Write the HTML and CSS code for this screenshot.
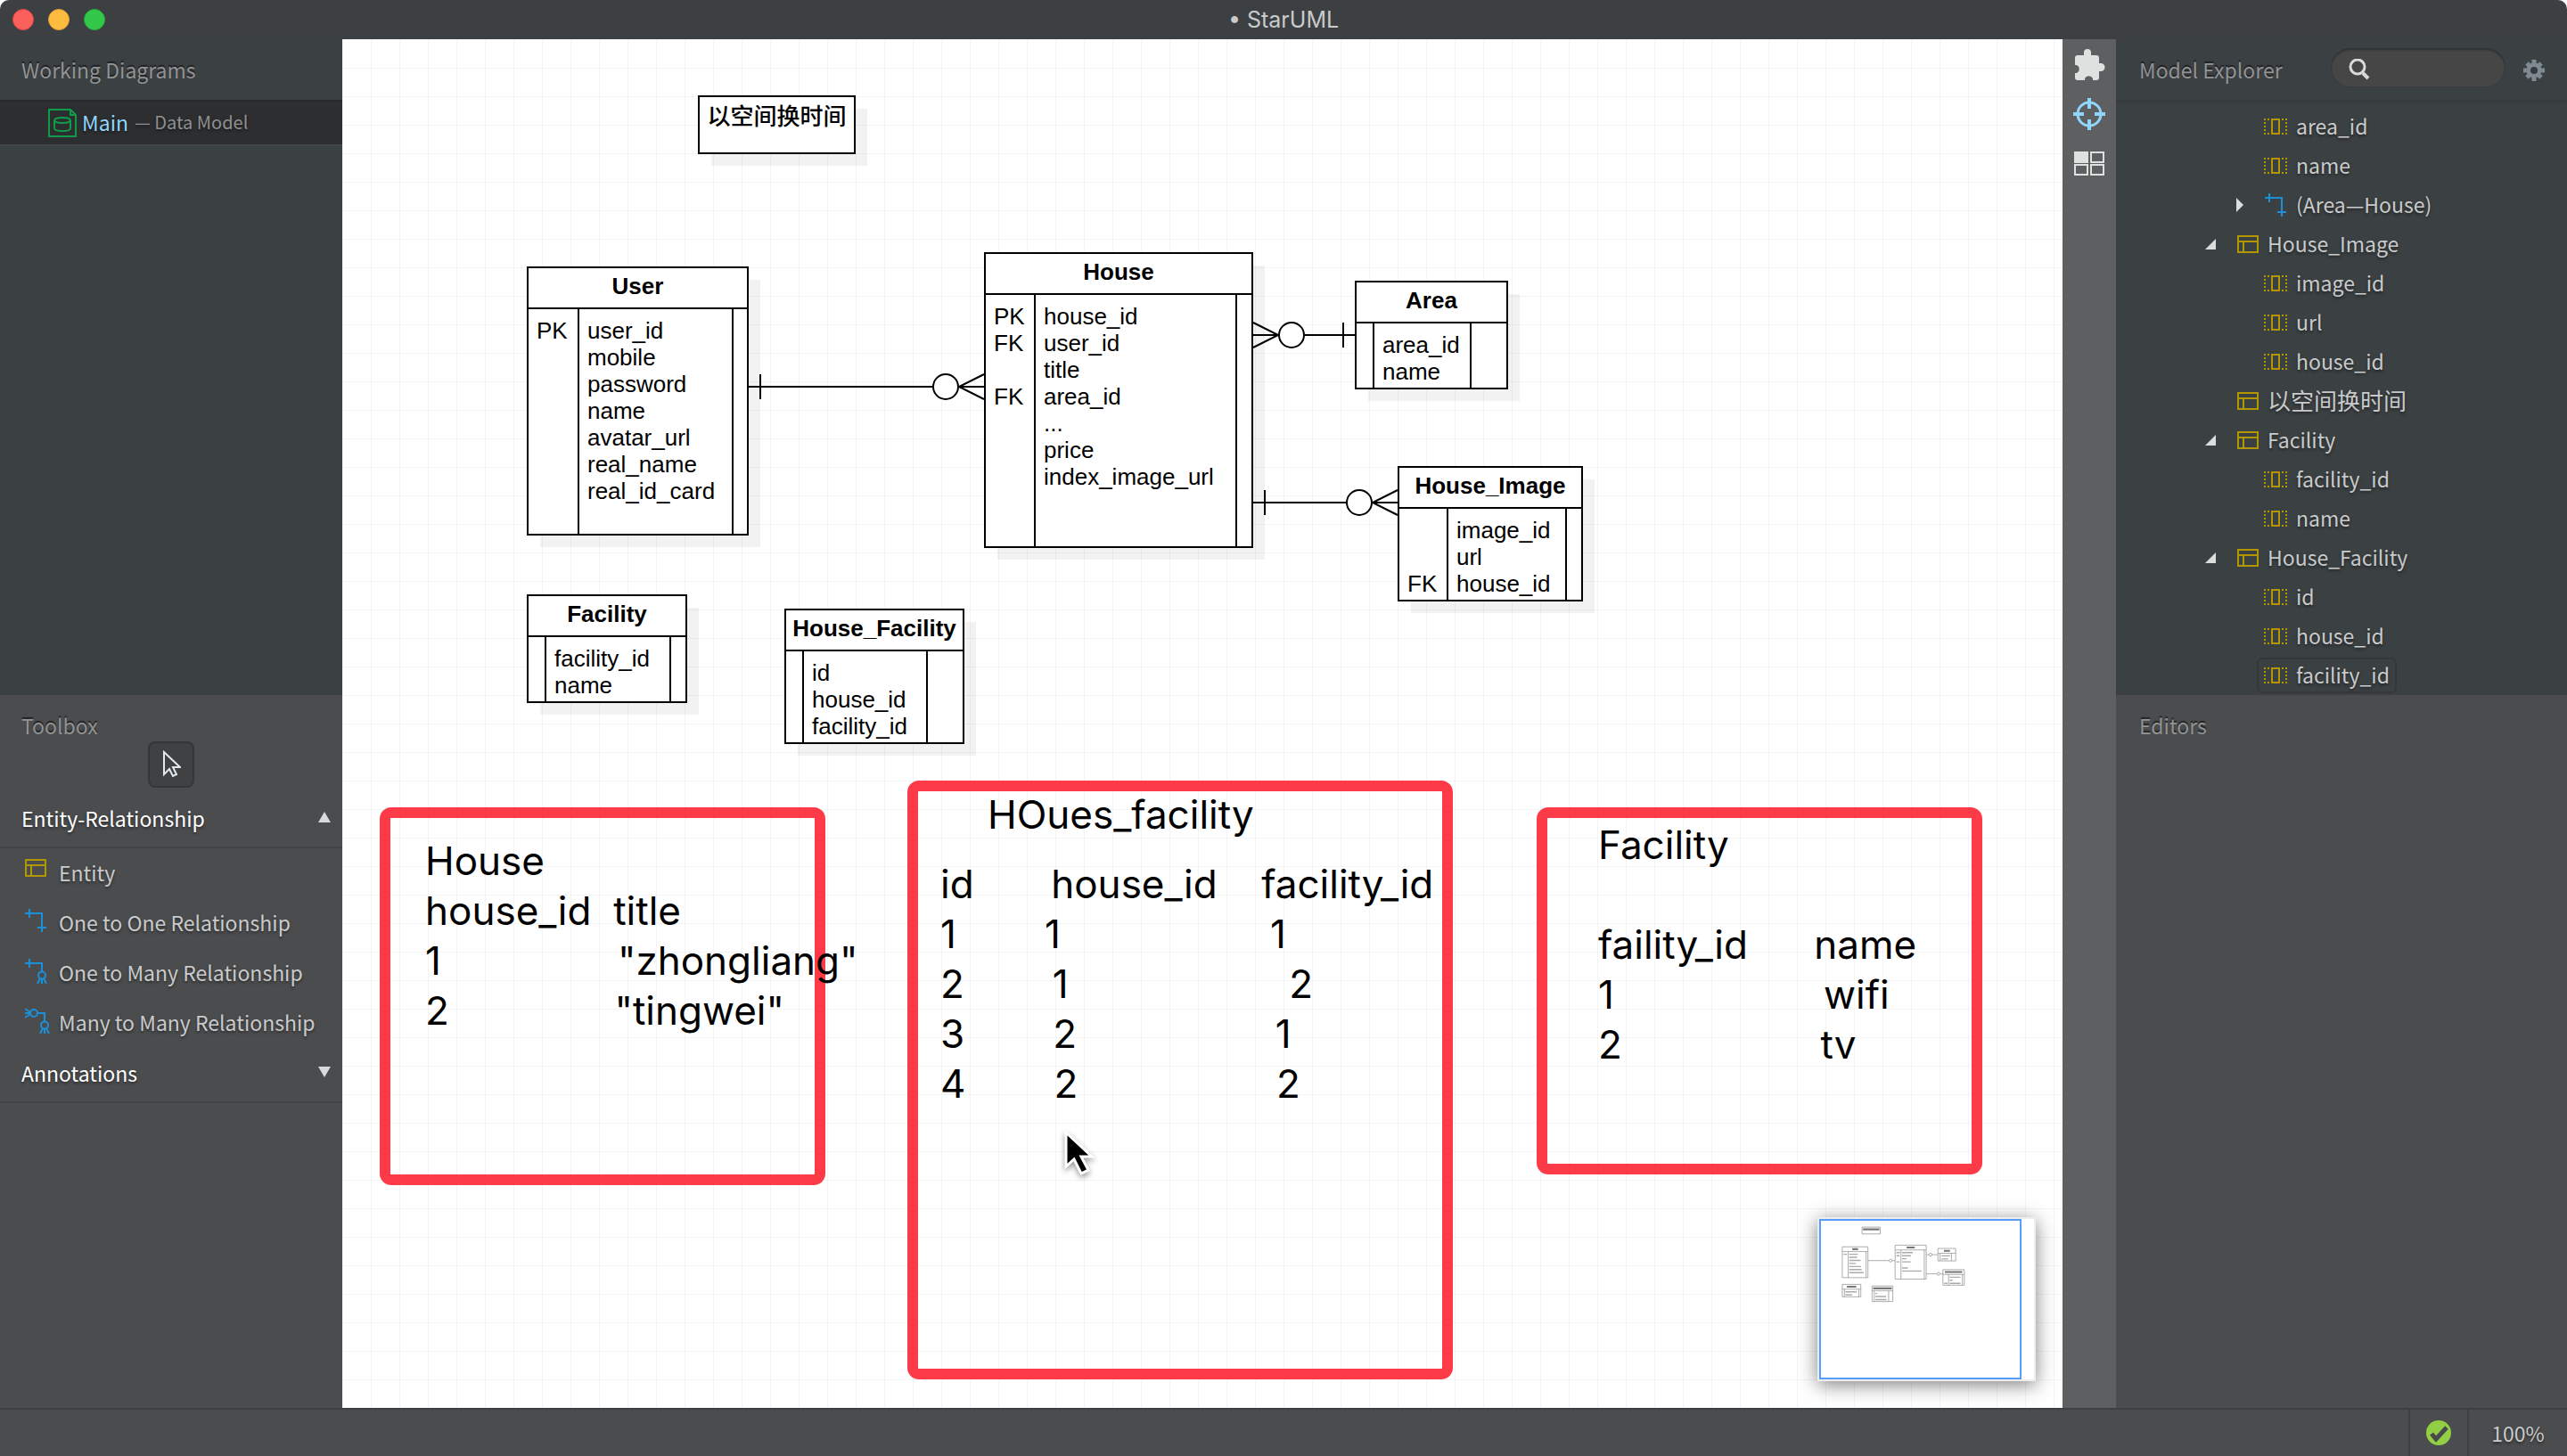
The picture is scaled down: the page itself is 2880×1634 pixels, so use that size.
FILE: index.html
```html
<!DOCTYPE html>
<html lang="en">
<head>
<meta charset="utf-8">
<title>StarUML</title>
<link rel="stylesheet" href="styles.css">
</head>
<body>
<svg class="sprite" aria-hidden="true">
  <symbol id="i-entity" viewBox="0 0 24 20"><path d="M1 1h22v18H1zM1 7h22M7 7v12" fill="none" stroke="#b39700" stroke-width="2"/></symbol>
  <symbol id="i-column" viewBox="0 0 26 18"><path d="M9 1h8v16H9z" fill="none" stroke="#b39700" stroke-width="2"/><path d="M1 0v18M25 0v18" fill="none" stroke="#b39700" stroke-width="2" stroke-dasharray="2 2"/><path d="M4 1h2M4 17h2M20 1h2M20 17h2" stroke="#b39700" stroke-width="2"/></symbol>
  <symbol id="i-one" viewBox="0 0 24 26"><path d="M0 5h19v21M5 0v10M14 21h10" fill="none" stroke="#1b8fd8" stroke-width="2"/></symbol>
  <symbol id="i-many" viewBox="0 0 28 28"><path d="M0 5h19v9M5 0v10M17 22l-3 6M19 23v5M21 22l3 6" fill="none" stroke="#1b8fd8" stroke-width="2"/><circle cx="19" cy="18.500" r="4" fill="none" stroke="#1b8fd8" stroke-width="2"/></symbol>
  <symbol id="i-manymany" viewBox="0 0 28 28"><path d="M14 5h8v9M0 0l6 4M0 5h6M0 10l6-4M20 22l-3 6M22 23v5M24 22l3 6" fill="none" stroke="#1b8fd8" stroke-width="2"/><circle cx="10" cy="5" r="4" fill="none" stroke="#1b8fd8" stroke-width="2"/><circle cx="22" cy="18.500" r="4" fill="none" stroke="#1b8fd8" stroke-width="2"/></symbol>
</svg>

<div class="window">
  <header class="titlebar">
    <div class="lights"><button class="light close" aria-label="Close"></button><button class="light minimize" aria-label="Minimize"></button><button class="light zoom" aria-label="Zoom"></button></div>
    <h1 class="title">• StarUML</h1>
  </header>

  <div class="workspace">
    <aside class="sidebar">
      <section class="panel working">
        <h2 class="panel-title">Working Diagrams</h2>
        <a class="diagram-item" href="#main">
          <svg class="diagram-icon" viewBox="0 0 32 32"><path d="M1 1h24l6 6v24H1zM25 1v6h6" fill="none" stroke="#0e9c4a" stroke-width="2"/><ellipse cx="16" cy="13" rx="9" ry="3" fill="none" stroke="#0e9c4a" stroke-width="2"/><path d="M7 13v9c0 2 4 3 9 3s9-1 9-3v-9" fill="none" stroke="#0e9c4a" stroke-width="2"/></svg>
          <span class="diagram-name">Main</span><span class="diagram-model">— Data Model</span>
        </a>
      </section>
      <section class="panel toolbox">
        <h2 class="panel-title">Toolbox</h2>
        <button class="select-tool" aria-label="Select"><svg width="22" height="32" viewBox="0 0 22 32"><path d="M3 2v25l6-6 4 8 4-2-4-8h8z" fill="none" stroke="#dfe8ee" stroke-width="2"/></svg></button>
        <button class="group">Entity-Relationship<svg width="14" height="12"><path d="M7 0l7 12H0z" fill="#d8d9da"/></svg></button>
        <ul class="tools">
          <li><svg class="tool-icon" width="24" height="20"><use href="#i-entity"/></svg>Entity</li>
          <li><svg class="tool-icon" width="24" height="26"><use href="#i-one"/></svg>One to One Relationship</li>
          <li><svg class="tool-icon" width="28" height="28"><use href="#i-many"/></svg>One to Many Relationship</li>
          <li><svg class="tool-icon" width="28" height="28"><use href="#i-manymany"/></svg>Many to Many Relationship</li>
        </ul>
        <button class="group">Annotations<svg width="14" height="12"><path d="M0 0h14L7 12z" fill="#d8d9da"/></svg></button>
      </section>
    </aside>

    <main class="canvas">
      <svg class="links" width="1930" height="1536" fill="none" stroke="#000" stroke-width="2">
        <path d="M456 390h206M469 376v28M720 376l-28 14 28 14M690 390h30"/><circle cx="677" cy="390" r="14"/>
        <path d="M1022 318l28 14-28 14M1022 332h28M1080 332h58M1123 318v28"/><circle cx="1065" cy="332" r="14"/>
        <path d="M1022 520h106M1035 506v28M1184 506l-28 14 28 14M1156 520h28"/><circle cx="1141" cy="520" r="14"/>
      </svg>

      <section class="entity note-entity"><h3>以空间换时间</h3></section>
      <section class="entity user"><h3>User</h3><div class="cols">
        <ul><li>PK</li></ul>
        <ul><li>user_id</li><li>mobile</li><li>password</li><li>name</li><li>avatar_url</li><li>real_name</li><li>real_id_card</li></ul>
        <ul></ul></div></section>
      <section class="entity house"><h3>House</h3><div class="cols">
        <ul><li>PK</li><li>FK</li><li></li><li>FK</li></ul>
        <ul><li>house_id</li><li>user_id</li><li>title</li><li>area_id</li><li>...</li><li>price</li><li>index_image_url</li></ul>
        <ul></ul></div></section>
      <section class="entity area"><h3>Area</h3><div class="cols">
        <ul></ul><ul><li>area_id</li><li>name</li></ul><ul></ul></div></section>
      <section class="entity house-image"><h3>House_Image</h3><div class="cols">
        <ul><li></li><li></li><li>FK</li></ul><ul><li>image_id</li><li>url</li><li>house_id</li></ul><ul></ul></div></section>
      <section class="entity facility"><h3>Facility</h3><div class="cols">
        <ul></ul><ul><li>facility_id</li><li>name</li></ul><ul></ul></div></section>
      <section class="entity house-facility"><h3>House_Facility</h3><div class="cols">
        <ul></ul><ul><li>id</li><li>house_id</li><li>facility_id</li></ul><ul></ul></div></section>

      <div class="frame frame-house"></div>
      <div class="frame frame-link"></div>
      <div class="frame frame-facility"></div>
      <pre class="memo memo-house">House
house_id  title
1                "zhongliang"
2               "tingwei"</pre>
      <pre class="memo memo-link-title">HOues_facility</pre>
      <pre class="memo memo-link">id       house_id    facility_id
1        1                   1
2        1                    2
3        2                  1
4        2                  2</pre>
      <pre class="memo memo-facility">Facility

faility_id      name
1                   wifi
2                  tv</pre>

      <svg class="cursor" width="36" height="54" viewBox="0 0 36 54"><path d="M3 3v38l9-8 8 16 8-4-8-15h12z" fill="#000" stroke="#fff" stroke-width="3"/></svg>

      <div class="minimap">
        <svg viewBox="0 0 1930 1536" preserveAspectRatio="none" aria-hidden="true">
          <g fill="#fff" stroke="#999" stroke-width="7">
            <path d="M399 62h177v67H399zM207 255h249v302H207zM720 239h302v332H720zM1136 271h172v122h-172zM1184 479h208v152h-208zM207 623h180v122H207zM496 639h202v152H496z"/>
            <path d="M207 302h249M265 302v255M438 302v255M720 286h302M777 286v285M1003 286v285M1136 318h172M1157 318v75M1267 318v75M1184 526h208M1239 526v105M1373 526v105M207 670h180M228 670v75M368 670v75M496 686h202M517 686v105M657 686v105M456 390h206M692 390h28M1022 332h28M1080 332h56M1022 520h106M1156 520h28"/>
            <circle cx="677" cy="390" r="14"/><circle cx="1065" cy="332" r="14"/><circle cx="1141" cy="520" r="14"/>
          </g>
          <path d="M408 84h159M304 278h56M832 262h79M1194 294h58M1204 502h168M252 646h90M506 662h182" stroke="#777" stroke-width="18"/>
          <path d="M218 328h35M275 328h84M275 358h76M275 388h110M275 418h64M275 448h114M275 478h120M275 508h140M732 312h35M732 342h32M732 402h32M788 312h104M788 342h84M788 372h42M788 402h84M788 462h56M788 492h188M1170 344h84M1170 374h64M1250 553h104M1250 583h28M1196 613h32M1250 613h104M238 696h110M238 726h64M528 712h20M528 742h104M528 772h110" stroke="#aaa" stroke-width="12"/>
        </svg>
      </div>
    </main>

    <nav class="strip">
      <button aria-label="Extensions"><svg width="36" height="36" viewBox="0 0 36 36"><path d="M5 7h7V4a4 4 0 0 1 8 0v3h6q3 0 3 3v6h2a4 4 0 0 1 0 9h-2v7q0 3-3 3h-4v-2a5 5 0 0 0-9 0v2H5q-3 0-3-3v-5h2a5 5 0 0 0 0-9H2v-8q0-3 3-3z" fill="#dfe1e1"/></svg></button>
      <button aria-label="Navigator"><svg width="36" height="36" viewBox="0 0 36 36" fill="none" stroke="#8fd6fa"><circle cx="18" cy="18" r="13" stroke-width="3"/><path d="M18 0v12M18 24v12M0 18h12M24 18h12" stroke-width="4"/></svg></button>
      <button aria-label="Thumbnails"><svg width="36" height="28" viewBox="0 0 36 28" fill="none" stroke="#dfe1e1" stroke-width="2"><path d="M2 2h14v11H2z" fill="#dfe1e1"/><path d="M20 2h14v11H20zM2 16h14v11H2zM20 16h14v11H20z"/></svg></button>
    </nav>

    <aside class="explorer">
      <section class="panel model">
        <div class="model-head">
          <h2 class="panel-title">Model Explorer</h2>
          <label class="search"><svg width="24" height="24" viewBox="0 0 24 24" fill="none" stroke="#d8d9da"><circle cx="10" cy="9" r="8" stroke-width="3"/><path d="M16 16l6 6" stroke-width="4"/></svg><input type="text" aria-label="Search"></label>
          <button class="gear" aria-label="Settings"><svg width="24" height="24" viewBox="0 0 24 24"><path d="M12 0v24M0 12h24M4 4l16 16M20 4L4 20" stroke="#7f8a90" stroke-width="5"/><circle cx="12" cy="12" r="6" fill="none" stroke="#7f8a90" stroke-width="5"/><circle cx="12" cy="12" r="4" fill="#373b3d"/></svg></button>
        </div>
        <ul class="tree">
          <li class="leaf"><svg width="26" height="18"><use href="#i-column"/></svg><span>area_id</span></li>
          <li class="leaf"><svg width="26" height="18"><use href="#i-column"/></svg><span>name</span></li>
          <li class="leaf closed"><svg class="twist" width="8" height="16"><path d="M0 0l8 8-8 8z" fill="#dcdddd"/></svg><svg width="26" height="26" viewBox="0 0 24 26"><use href="#i-one"/></svg><span>(Area—House)</span></li>
          <li class="node"><svg class="twist" width="12" height="12"><path d="M12 0v12H0z" fill="#dcdddd"/></svg><svg width="24" height="20"><use href="#i-entity"/></svg><span>House_Image</span></li>
          <li class="leaf"><svg width="26" height="18"><use href="#i-column"/></svg><span>image_id</span></li>
          <li class="leaf"><svg width="26" height="18"><use href="#i-column"/></svg><span>url</span></li>
          <li class="leaf"><svg width="26" height="18"><use href="#i-column"/></svg><span>house_id</span></li>
          <li class="node"><svg class="twist" width="12" height="12"></svg><svg width="24" height="20"><use href="#i-entity"/></svg><span class="han">以空间换时间</span></li>
          <li class="node"><svg class="twist" width="12" height="12"><path d="M12 0v12H0z" fill="#dcdddd"/></svg><svg width="24" height="20"><use href="#i-entity"/></svg><span>Facility</span></li>
          <li class="leaf"><svg width="26" height="18"><use href="#i-column"/></svg><span>facility_id</span></li>
          <li class="leaf"><svg width="26" height="18"><use href="#i-column"/></svg><span>name</span></li>
          <li class="node"><svg class="twist" width="12" height="12"><path d="M12 0v12H0z" fill="#dcdddd"/></svg><svg width="24" height="20"><use href="#i-entity"/></svg><span>House_Facility</span></li>
          <li class="leaf"><svg width="26" height="18"><use href="#i-column"/></svg><span>id</span></li>
          <li class="leaf"><svg width="26" height="18"><use href="#i-column"/></svg><span>house_id</span></li>
          <li class="leaf"><div class="selected"><svg width="26" height="18"><use href="#i-column"/></svg><span>facility_id</span></div></li>
        </ul>
      </section>
      <section class="panel editors"><h2 class="panel-title">Editors</h2></section>
    </aside>
  </div>

  <footer class="statusbar">
    <div class="status-cell check"><svg width="28" height="28" viewBox="0 0 28 28"><circle cx="14" cy="14" r="14" fill="#93cf45"/><path d="M6 15l5 6L23 8" fill="none" stroke="#47494a" stroke-width="5"/></svg></div>
    <div class="status-cell zoom-level">100%</div>
  </footer>
</div>
</body>
</html>
```
FILE: styles.css
```css
* { box-sizing: border-box; margin: 0; padding: 0; }
body { background: #fff; font: 23px/30px "Noto Sans CJK SC", "Noto Sans", sans-serif; color: #c9cacb; }
ul { list-style: none; }
svg { display: block; flex: none; }
button { border: 0; background: none; color: inherit; font: inherit; }
.sprite { display: none; }

.window { min-height: 100vh; display: flex; flex-direction: column; border-radius: 10px 10px 0 0; overflow: hidden; background: #3c4042; }
.titlebar { height: 44px; display: grid; grid-template-columns: 1fr auto 1fr; align-items: center; padding: 0 14px; }
.lights { display: flex; gap: 16px; }
.light { width: 24px; height: 24px; border-radius: 50%; border: 1px solid; }
.close { background: #fc605c; border-color: #df4744; }
.minimize { background: #fdbc40; border-color: #de9f34; }
.zoom { background: #34c84a; border-color: #27a93a; }
.title { font: 25px/30px Inter, sans-serif; color: #c9caca; }

.workspace { flex: 1; display: grid; grid-template-columns: 384px minmax(0, 1fr) 60px 506px; }
.sidebar, .explorer { display: grid; grid-template-rows: 736px 1fr; background: #3b4042; }
.toolbox, .editors { background: #4b4c4d; }
.panel-title { font-size: 23px; line-height: 30px; font-weight: 400; color: #929394; text-shadow: 0 -2px 1px #1f2122; padding: 19px 24px; }
.explorer .panel-title { padding-left: 26px; }

.diagram-item { display: flex; align-items: center; height: 52px; padding-left: 54px; background: #2d2e30; border-top: 2px solid #28292a; border-bottom: 2px solid #424547; text-decoration: none; text-shadow: 0 2px 3px #1a1a1a; }
.diagram-icon { width: 32px; height: 32px; margin-right: 6px; }
.diagram-name, .diagram-model { padding-bottom: 3px; }
.diagram-name { color: #8fd6fa; margin-right: 7px; }
.diagram-model { font-size: 20px; color: #8f9091; }

.toolbox { display: flex; flex-direction: column; }
.toolbox .panel-title { padding-bottom: 3px; }
.select-tool { align-self: center; width: 52px; height: 52px; margin-bottom: 6px; display: grid; place-items: center; background: #404143; border: 2px solid #353637; border-radius: 8px; }
.group { height: 62px; display: flex; justify-content: space-between; align-items: flex-start; padding: 13px 13px 0 24px; color: #fff; border-bottom: 2px solid #424344; text-shadow: 0 2px 3px #2a2b2c; }
.group svg { margin-top: 8px; }
.tools li { display: flex; height: 56px; padding: 12px 0 0 28px; line-height: 30px; text-shadow: 0 2px 3px #2a2b2c; }
.tool-icon { margin-right: 10px; }
.tool-icon[width="24"] { margin-right: 14px; }

.canvas { position: relative; overflow: hidden; background-color: #fff; background-image: linear-gradient(90deg, #f4f4f4 1px, transparent 1px), linear-gradient(#f4f4f4 1px, transparent 1px); background-size: 32px 32px; color: #000; }
.links { position: absolute; left: 0; top: 0; }
.links circle { fill: #fff; }
.entity { position: absolute; display: flex; flex-direction: column; background: #fff; border: 2px solid #000; box-shadow: 14px 14px 0 -1px rgba(0, 0, 0, .05); font: 26px/30px "Liberation Sans", Arial, sans-serif; }
.entity h3 { font-size: 26px; line-height: 30px; text-align: center; padding: 5px 0 9px; }
.cols { flex: 1; display: grid; border-top: 2px solid #000; font-kerning: none; }
.cols ul { padding: 9px 0 3px 9px; border-left: 2px solid #000; }
.cols ul:first-child { border-left: 0; }
.cols li { height: 30px; }
.note-entity { left: 399px; top: 63px; width: 177px; height: 66px; }
.note-entity h3 { font-family: "Noto Sans CJK SC", sans-serif; font-weight: 500; }
.user { left: 207px; top: 255px; width: 249px; height: 302px; }
.user .cols { grid-template-columns: 55px 1fr 17px; }
.house { left: 720px; top: 239px; width: 302px; height: 332px; }
.house .cols { grid-template-columns: 54px 1fr 18px; }
.area { left: 1136px; top: 271px; width: 172px; }
.area .cols { grid-template-columns: 18px 1fr 41px; }
.house-image { left: 1184px; top: 479px; width: 208px; }
.house-image .cols { grid-template-columns: 53px 1fr 18px; }
.facility { left: 207px; top: 623px; width: 180px; }
.facility .cols { grid-template-columns: 18px 1fr 18px; }
.house-facility { left: 496px; top: 639px; width: 202px; }
.house-facility .cols { grid-template-columns: 18px 1fr 41px; }

.frame { position: absolute; border: 12px solid #fd3a47; border-radius: 13px; }
.frame-house { left: 42px; top: 862px; width: 500px; height: 424px; }
.frame-link { left: 634px; top: 832px; width: 612px; height: 672px; }
.frame-facility { left: 1340px; top: 862px; width: 500px; height: 412px; }
.memo { position: absolute; font: 44px/56px Inter, sans-serif; }
.memo-house { left: 93px; top: 894px; }
.memo-link-title { left: 724px; top: 842px; }
.memo-link { left: 671px; top: 920px; }
.memo-facility { left: 1409px; top: 876px; }
.cursor { position: absolute; left: 809px; top: 1224px; filter: drop-shadow(0 3px 3px rgba(0, 0, 0, .4)); }
.minimap { position: absolute; right: 30px; bottom: 30px; width: 245px; height: 184px; border: 2px solid #eee; background: #fff; box-shadow: 0 4px 20px rgba(0, 0, 0, .5); }
.minimap svg { width: 227px; height: 180px; border: 2px solid #559dff; }

.strip { background: #5e5f61; display: flex; flex-direction: column; align-items: center; gap: 15px; padding-top: 9px; }
.strip button { height: 40px; display: grid; place-items: center; }

.model-head { display: flex; height: 68px; align-items: flex-start; }
.model-head .panel-title { flex: 1; padding-right: 0; }
.search { display: flex; width: 196px; height: 44px; margin: 10px 20px 0 0; padding: 12px 20px; border-radius: 22px; background: #454645; box-shadow: inset 0 2px 2px #303232, inset 0 0 0 1px #3a3c3c; }
.search input { flex: 1; min-width: 0; border: 0; background: none; color: inherit; font: inherit; outline: 0; }
.gear { margin: 23px 25px 0 0; }
.tree { padding-top: 8px; box-shadow: inset 0 5px 5px -3px #35393b; }
.tree li { display: flex; align-items: center; height: 44px; text-shadow: 0 2px 3px #222526; }
.tree span { padding-bottom: 3px; }
.han { font-size: 26px; }
.leaf { padding-left: 166px; gap: 10px; }
.closed { padding-left: 135px; }
.closed .twist { margin-right: 13px; }
.node { padding-left: 100px; gap: 10px; }
.node .twist { margin-right: 14px; }
.selected { display: flex; align-items: center; gap: 10px; height: 40px; margin-left: -8px; padding: 0 6px; border: 2px solid #363837; border-radius: 6px; }

.statusbar { height: 54px; display: flex; justify-content: flex-end; background: #4b4c4d; border-top: 2px solid #3b4042; }
.status-cell { display: grid; place-items: center; border-left: 2px solid #3b4042; }
.check { width: 66px; }
.zoom-level { width: 112px; text-shadow: 0 2px 3px #2a2b2c; }
```
